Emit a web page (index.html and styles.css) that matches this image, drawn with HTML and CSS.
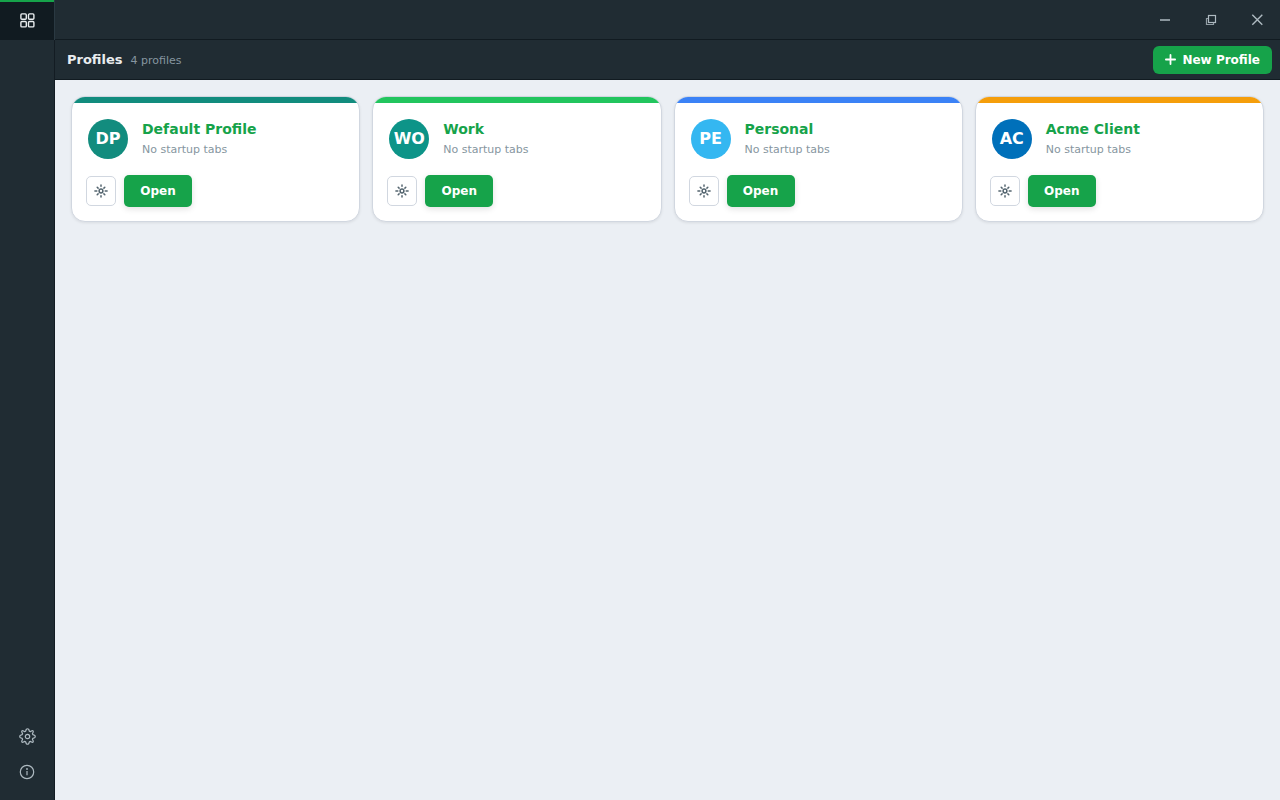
FILE: index.html
```html
<!DOCTYPE html>
<html lang="en">
<head>
  <meta charset="UTF-8">
  <meta name="viewport" content="width=device-width, initial-scale=1.0">
  <title>Profiles</title>
  <link rel="stylesheet" href="styles.css">
</head>
<body>
  <svg class="sprite" aria-hidden="true">
    <symbol id="icon-cog" viewBox="0 0 14 14">
      <circle cx="7" cy="7" r="1.9" fill="none" stroke="currentColor" stroke-width="1.5"/>
      <path d="M7 .9v1.3M7 11.8v1.3M.9 7h1.9M11.2 7h1.9M3.2 3.2l.9 .9M9.9 9.9l.9 .9M3.2 10.8l.9-.9M9.9 4.1l.9-.9" fill="none" stroke="currentColor" stroke-width="1.5" stroke-linecap="round"/>
    </symbol>
  </svg>

  <nav class="sidebar">
    <button class="side-tab active" aria-label="Profiles">
      <svg width="16" height="16" viewBox="0 0 16 16" fill="none" stroke="currentColor" stroke-width="1.4">
        <rect x="1.9" y="1.9" width="5.4" height="5.4" rx="1"/>
        <rect x="9.5" y="1.9" width="5.4" height="5.4" rx="1"/>
        <rect x="1.9" y="9.5" width="5.4" height="5.4" rx="1"/>
        <rect x="9.5" y="9.5" width="5.4" height="5.4" rx="1"/>
      </svg>
    </button>
    <div class="side-bottom">
      <button class="side-button" aria-label="Settings">
        <svg width="18" height="18" viewBox="0 0 18 18" fill="none" stroke="currentColor" stroke-width="1.2" stroke-linejoin="round">
          <circle cx="9.5" cy="9.5" r="2.2"/>
          <path d="M8.2 2.5Q9.5 1 10.8 2.5L11.4 4.2L12.3 4.6L14 3.8Q15.6 3.4 15.2 5L14.4 6.7L14.8 7.6L16.5 8.2Q18 9.5 16.5 10.8L14.8 11.4L14.4 12.3L15.2 14Q15.6 15.6 14 15.2L12.3 14.4L11.4 14.8L10.8 16.5Q9.5 18 8.2 16.5L7.6 14.8L6.7 14.4L5 15.2Q3.4 15.6 3.8 14L4.6 12.3L4.2 11.4L2.5 10.8Q1 9.5 2.5 8.2L4.2 7.6L4.6 6.7L3.8 5Q3.4 3.4 5 3.8L6.7 4.6L7.6 4.2Z"/>
        </svg>
      </button>
      <button class="side-button" aria-label="About">
        <svg width="16" height="16" viewBox="0 0 16 16" fill="none" stroke="currentColor" stroke-width="1.2">
          <circle cx="8" cy="8" r="6.7"/>
          <path d="M8 7v4.2"/>
          <circle cx="8" cy="5" r=".9" fill="currentColor" stroke="none"/>
        </svg>
      </button>
    </div>
  </nav>

  <div class="main">
    <div class="titlebar">
      <button class="window-button" aria-label="Minimize">
        <svg width="12" height="12" viewBox="0 0 12 12"><path d="M1 5h10v2H1z" fill="currentColor" opacity=".75"/></svg>
      </button>
      <button class="window-button" aria-label="Restore">
        <svg width="12" height="12" viewBox="0 0 12 12" fill="none" stroke="currentColor" stroke-width="1.2">
          <path d="M3.5 4.5h-2v6h7v-2" opacity=".8"/>
          <rect x="3.5" y="1.5" width="7" height="7"/>
        </svg>
      </button>
      <button class="window-button" aria-label="Close">
        <svg width="12" height="12" viewBox="0 0 12 12" fill="none" stroke="currentColor" stroke-width="1.4"><path d="M1.3 .8l10 10M11.3 .8l-10 10"/></svg>
      </button>
    </div>

    <header class="toolbar">
      <div class="heading">
        <h1>Profiles</h1>
        <span class="count">4 profiles</span>
      </div>
      <button class="new-button">
        <svg width="11" height="11" viewBox="0 0 11 11" fill="none" stroke="currentColor" stroke-width="1.8" stroke-linecap="round"><path d="M5.5 .9v9.2M.9 5.5h9.2"/></svg>
        New Profile
      </button>
    </header>

    <main class="profile-grid">
      <article class="card teal">
        <div class="card-head">
          <div class="avatar">DP</div>
          <div class="info">
            <h2>Default Profile</h2>
            <p>No startup tabs</p>
          </div>
        </div>
        <div class="card-actions">
          <button class="cog-button" aria-label="Edit Default Profile"><svg width="14" height="14"><use href="#icon-cog"/></svg></button>
          <button class="open-button">Open</button>
        </div>
      </article>

      <article class="card green">
        <div class="card-head">
          <div class="avatar">WO</div>
          <div class="info">
            <h2>Work</h2>
            <p>No startup tabs</p>
          </div>
        </div>
        <div class="card-actions">
          <button class="cog-button" aria-label="Edit Work"><svg width="14" height="14"><use href="#icon-cog"/></svg></button>
          <button class="open-button">Open</button>
        </div>
      </article>

      <article class="card blue">
        <div class="card-head">
          <div class="avatar">PE</div>
          <div class="info">
            <h2>Personal</h2>
            <p>No startup tabs</p>
          </div>
        </div>
        <div class="card-actions">
          <button class="cog-button" aria-label="Edit Personal"><svg width="14" height="14"><use href="#icon-cog"/></svg></button>
          <button class="open-button">Open</button>
        </div>
      </article>

      <article class="card orange">
        <div class="card-head">
          <div class="avatar">AC</div>
          <div class="info">
            <h2>Acme Client</h2>
            <p>No startup tabs</p>
          </div>
        </div>
        <div class="card-actions">
          <button class="cog-button" aria-label="Edit Acme Client"><svg width="14" height="14"><use href="#icon-cog"/></svg></button>
          <button class="open-button">Open</button>
        </div>
      </article>
    </main>
  </div>
</body>
</html>
```
FILE: styles.css
```css
* {
  box-sizing: border-box;
}
body {
  margin: 0;
  display: flex;
  min-height: 100vh;
  background: #ebeff4;
  font-family: 'DejaVu Sans', sans-serif;
}
h1, h2, p {
  margin: 0;
}
button {
  display: flex;
  align-items: center;
  justify-content: center;
  padding: 0;
  border: none;
  background: none;
  font-family: inherit;
  cursor: pointer;
}
.sprite {
  display: none;
}

/* sidebar */
.sidebar {
  width: 55px;
  flex-shrink: 0;
  display: flex;
  flex-direction: column;
  justify-content: space-between;
  background: linear-gradient(to left, #131c23 1px, #202c33 1px);
  color: #aebac1;
}
.side-tab {
  height: 40px;
  border-right: 1px solid #2a3942;
}
.side-tab.active {
  background: #111b21;
  color: #e9edef;
  box-shadow: inset 0 2px #16a34a;
}
.side-bottom {
  display: flex;
  flex-direction: column;
  padding: 0 1px 10px 0;
}
.side-button {
  height: 36px;
  color: #aebac1;
}

/* top bars */
.main {
  flex: 1;
  min-width: 0;
}
.titlebar {
  height: 40px;
  display: flex;
  justify-content: flex-end;
  background: #202c33;
  border-bottom: 1px solid #111b21;
}
.window-button {
  width: 46px;
  color: #aebac1;
}
.toolbar {
  height: 40px;
  display: flex;
  align-items: center;
  justify-content: space-between;
  padding: 0 8px 0 12px;
  background: #202c33;
  border-bottom: 1px solid #111b21;
}
.heading {
  display: flex;
  align-items: baseline;
  gap: 8px;
}
.heading h1 {
  font-size: 13px;
  color: #e9edef;
}
.count {
  font-size: 11px;
  color: #8696a0;
}
.new-button {
  height: 28px;
  padding: 0 12px;
  gap: 6px;
  border-radius: 6px;
  background: #16a34a;
  color: #fff;
  font-size: 12px;
  font-weight: bold;
}

/* profile cards */
.profile-grid {
  display: grid;
  grid-template-columns: repeat(auto-fill, minmax(260px, 1fr));
  gap: 12px;
  padding: 16px;
}
.card {
  overflow: hidden;
  border: 1px solid #d1d7e0;
  border-radius: 14px;
  background: #fff;
  box-shadow: 0 1px 3px rgba(0, 0, 0, 0.08);
}
.card::before {
  content: '';
  display: block;
  height: 6px;
  background: var(--stripe);
}
.teal { --stripe: #128c7e; --avatar: #128c7e; }
.green { --stripe: #22c55e; --avatar: #0d9488; }
.blue { --stripe: #3b82f6; --avatar: #34b7f1; }
.orange { --stripe: #f59e0b; --avatar: #0070ba; }
.card-head {
  display: flex;
  align-items: center;
  gap: 14px;
  padding: 16px 16px 0;
}
.avatar {
  width: 40px;
  height: 40px;
  display: flex;
  align-items: center;
  justify-content: center;
  border-radius: 50%;
  background: var(--avatar);
  color: #fff;
  font-size: 16px;
  line-height: 16px;
  font-weight: bold;
}
.info h2 {
  font-size: 14px;
  line-height: 20px;
  color: #16a34a;
}
.info p {
  margin-top: 2px;
  font-size: 11px;
  line-height: 18px;
  color: #8696a0;
}
.card-actions {
  display: flex;
  align-items: center;
  gap: 8px;
  padding: 16px 14px 14px;
}
.cog-button {
  width: 30px;
  height: 30px;
  border: 1px solid #d1d7e0;
  border-radius: 5px;
  color: #54656f;
}
.open-button {
  min-width: 68px;
  height: 32px;
  padding: 0 16px;
  border-radius: 5px;
  background: #16a34a;
  color: #fff;
  font-size: 12px;
  font-weight: bold;
  box-shadow: 0 2px 6px rgba(0, 0, 0, 0.12);
}
```
